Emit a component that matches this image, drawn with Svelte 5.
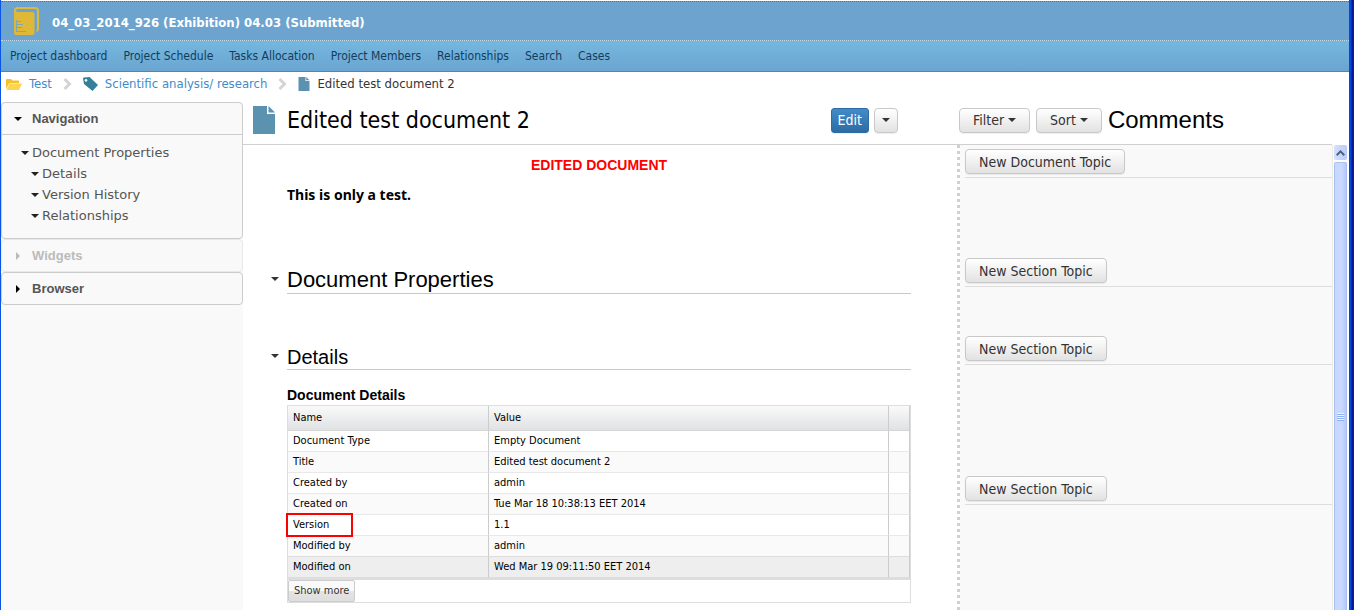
<script>
  const tabs = ['Project dashboard', 'Project Schedule', 'Tasks Allocation', 'Project Members', 'Relationships', 'Search', 'Cases'];
  const outline = ['Details', 'Version History', 'Relationships'];
  const rows = [
    ['Document Type', 'Empty Document'],
    ['Title', 'Edited test document 2'],
    ['Created by', 'admin'],
    ['Created on', 'Tue Mar 18 10:38:13 EET 2014'],
    ['Version', '1.1'],
    ['Modified by', 'admin'],
    ['Modified on', 'Wed Mar 19 09:11:50 EET 2014']
  ];
  const topics = [
    { label: 'New Document Topic', height: 33 },
    { label: 'New Section Topic', height: 109 },
    { label: 'New Section Topic', height: 78 },
    { label: 'New Section Topic', height: 140 }
  ];
</script>

{#snippet down()}
  <svg class="caret" width="8" height="4" viewBox="0 0 8 4" aria-hidden="true"><path d="M0 0h8L4 4z" fill="currentColor" /></svg>
{/snippet}

{#snippet right()}
  <svg class="caret" width="4" height="8" viewBox="0 0 4 8" aria-hidden="true"><path d="M0 0v8L4 4z" fill="currentColor" /></svg>
{/snippet}

{#snippet page(width, height)}
  <svg {width} {height} viewBox="0 0 22 28" aria-hidden="true">
    <path d="M0 0h14v8h8v20H0z" fill="#5a92af" />
    <path d="M15.500 0v6.500H22z" fill="#5a92af" />
  </svg>
{/snippet}

{#snippet chevron()}
  <svg class="chevron" width="9" height="12" viewBox="0 0 9 12" aria-hidden="true"><path d="M1.500 1l5 5-5 5" fill="none" stroke="#d4d4d4" stroke-width="3" /></svg>
{/snippet}

<div class="frame">
  <div class="app">
    <header>
      <div class="project">
        <svg width="26" height="28" viewBox="0 0 26 28" aria-hidden="true">
          <path d="M1 5V3.500Q1 1 4 1h17q3 0 3 3v18q0 1.500-1.500 2" fill="none" stroke="#e0b838" stroke-width="2" />
          <path d="M0 3Q1 5 4 5h14q2.500 0 2.500 2.500V26q0 2-2 2H2q-2 0-2-2z" fill="#e0b838" />
          <path d="M2.500 13v12M3 14.500h4M3 17.500h6M3 20.500h5M3 24.500h9" fill="none" stroke="#7fa8b4" stroke-width="1.200" />
        </svg>
        <strong>04_03_2014_926 (Exhibition) 04.03 (Submitted)</strong>
      </div>
      <nav class="tabs">
        {#each tabs as tab}<a href="#top">{tab}</a>{/each}
      </nav>
    </header>

    <nav class="crumbs" aria-label="Breadcrumb">
      <svg width="16" height="13" viewBox="0 0 16 13" aria-hidden="true">
        <path d="M0 11V2q0-1 1-1h4l1.500 1.500H12q1 0 1 1V5H3.500z" fill="#f3c02f" />
        <path d="M3.500 5.500H16L13 12H.500z" fill="#ffd451" />
      </svg>
      <a href="#test">Test</a>
      {@render chevron()}
      <svg width="15" height="14" viewBox="0 0 15 14" aria-hidden="true">
        <path fill-rule="evenodd" d="M0 1.500Q0 .500 1 .500L6.500 0 15 8l-5.500 6L1 7zM3 2a1.400 1.400 0 1 0 .010 0z" fill="#347f99" />
      </svg>
      <a href="#research">Scientific analysis/ research</a>
      {@render chevron()}
      {@render page(12, 14)}
      <span>Edited test document 2</span>
    </nav>

    <div class="body">
      <aside class="side">
        <section class="panel">
          <button class="fold">{@render down()}Navigation</button>
          <div class="tree">
            <a href="#properties">{@render down()}Document Properties</a>
            {#each outline as item}<a class="sub" href="#details">{@render down()}{item}</a>{/each}
          </div>
        </section>
        <section class="panel muted"><button class="fold">{@render right()}Widgets</button></section>
        <section class="panel"><button class="fold">{@render right()}Browser</button></section>
      </aside>

      <main>
        <div class="bar titlebar">
          {@render page(22, 28)}
          <h1>Edited test document 2</h1>
          <button class="btn primary">Edit</button>
          <button class="btn more" aria-label="More actions">{@render down()}</button>
        </div>
        <article>
          <p class="notice">EDITED DOCUMENT</p>
          <p class="intro">This is only a test.</p>
          <h2 id="properties">{@render down()}Document Properties</h2>
          <h2 id="details" class="small">{@render down()}Details</h2>
          <h3>Document Details</h3>
          <table>
            <colgroup><col class="name" /><col /><col class="tail" /></colgroup>
            <thead><tr><th>Name</th><th>Value</th><th></th></tr></thead>
            <tbody>
              {#each rows as [name, value]}
                <tr><td>{#if name === 'Version'}<span class="mark"></span>{/if}{name}</td><td>{value}</td><td></td></tr>
              {/each}
            </tbody>
          </table>
          <div class="foot"><button>Show more</button></div>
        </article>
      </main>

      <section class="comments">
        <div class="bar tools">
          <button class="btn">Filter{@render down()}</button>
          <button class="btn">Sort{@render down()}</button>
          <h1>Comments</h1>
        </div>
        <div class="thread">
          <div class="topics">
            {#each topics as topic}
              <div class="topic" style:height="{topic.height}px"><button class="btn">{topic.label}</button></div>
            {/each}
          </div>
          <div class="scroll" aria-hidden="true">
            <div class="up">
              <svg width="9" height="6" viewBox="0 0 9 6"><path d="M.700 5.200l3.800-3.800 3.800 3.800" fill="none" stroke="#4d6185" stroke-width="2" /></svg>
            </div>
            <div class="thumb"><i></i></div>
          </div>
        </div>
      </section>
    </div>
  </div>
</div>

<style>
  :global(body) { margin: 0; overflow: hidden; }
  * { box-sizing: border-box; }
  .frame {
    height: 100vh;
    padding: 1px 5px 0 1px;
    overflow: hidden;
    background: linear-gradient(90deg, #0a55e4, #0a55e4) left / 1px 100% no-repeat,
      linear-gradient(90deg, #0831d9 0, #0855dd 1px, #0040d8 2px, #001aa0 3px, #00138c 4px, #39335c 5px) right / 5px 100% no-repeat,
      #fff;
    font: 13px/18px "DejaVu Sans Condensed", "DejaVu Sans", sans-serif;
    color: #000;
  }
  .app { height: 100%; display: flex; flex-direction: column; background: #fff; }
  a { text-decoration: none; color: inherit; }
  button { font: inherit; cursor: pointer; }
  svg { flex: none; display: block; }
  h1, h2, h3, p { margin: 0; font-weight: 400; }

  .project {
    height: 40px;
    padding: 0 13px;
    display: flex;
    align-items: center;
    gap: 12px;
    border-top: 1px dotted #48749a;
    border-bottom: 1px dotted #c4dcec;
    background: #6ca4cf;
    color: #fff;
  }
  .project strong { padding-top: 3px; }
  .tabs {
    height: 31px;
    padding: 0 9px;
    display: flex;
    align-items: center;
    gap: 16px;
    border-bottom: 1px solid #4b89b4;
    background: linear-gradient(#76b7dd, #6aa5d1);
    color: #123d5e;
    font-size: 12px;
  }
  .crumbs {
    height: 30px;
    padding: 0 5px 6px;
    display: flex;
    align-items: center;
    gap: 7px;
    color: #333;
  }
  .crumbs a { color: #428bca; }
  .crumbs .chevron { margin: 0 4px; }

  .body { flex: 1; min-height: 0; display: grid; grid-template-columns: 242px minmax(0, 1fr) 392px; }
  .side { background: #f9f9f9; color: #555; }
  .panel { border: 1px solid #ccc; border-radius: 4px; }
  .fold {
    width: 100%;
    height: 31px;
    padding: 0 12px;
    display: flex;
    align-items: center;
    border: 0;
    background: none;
    color: #555;
    font: bold 13px/18px "Liberation Sans", Arial, sans-serif;
  }
  .fold .caret { width: 8px; margin-right: 10px; color: #000; }
  .muted { border-color: #e8e8e8; }
  .muted .fold, .muted .fold .caret { color: #bbb; }
  .tree {
    padding: 7px 19px 12px;
    border-top: 1px solid #ccc;
    display: flex;
    flex-direction: column;
    font: 13px/21px "DejaVu Sans", Verdana, sans-serif;
  }
  .tree a { display: flex; align-items: center; gap: 3px; }
  .tree .caret { color: #222; }
  .tree .sub { padding-left: 10px; }

  .bar { height: 43px; display: flex; align-items: center; border-bottom: 1px solid #d0d0d0; }
  .titlebar { padding: 0 59px 6px 10px; gap: 5px; }
  .titlebar h1 { flex: 1; padding-left: 7px; font-size: 23px; line-height: 28px; }
  .btn {
    height: 25px;
    padding: 0 13px;
    display: inline-flex;
    align-items: center;
    gap: 4px;
    border: 1px solid #c8c8c8;
    border-radius: 4px;
    background: linear-gradient(#fff, #e2e2e2);
    box-shadow: 0 1px 1px #0001;
    color: #333;
    font: 14px/18px "DejaVu Sans Condensed", "DejaVu Sans", sans-serif;
    white-space: nowrap;
  }
  .primary { padding: 0 6px; border-color: #2d6ca2; border-radius: 3px; background: linear-gradient(#428bca, #2d6ca2); color: #fff; }
  .more { padding: 0 7px; }
  article { padding: 10px 46px 0 44px; font: 14px/20px "Liberation Sans", Arial, sans-serif; }
  .notice { color: #f00; font-weight: 700; text-align: center; }
  .intro { margin: 10px 0 62px; font: bold 14px/20px "Noto Sans", sans-serif; }
  h2 { display: flex; align-items: center; height: 27px; margin-bottom: 50px; border-bottom: 1px solid #c8c8c8; font-size: 22px; line-height: 26px; }
  h2 .caret { width: 8px; margin: 0 8px 2px -16px; color: #333; }
  h2.small { height: 26px; margin-bottom: 15px; font-size: 20px; }
  h3 { font-size: 14px; font-weight: 700; }

  table { width: 100%; table-layout: fixed; border-collapse: separate; border-spacing: 0; border: 1px solid #ddd; border-bottom: 2px solid #ddd; font: 11px/14px "DejaVu Sans Condensed", "DejaVu Sans", sans-serif; }
  .name { width: 201px; }
  .tail { width: 21px; }
  th, td { padding: 0 5px; text-align: left; font-weight: 400; border-right: 1px solid #ccc; }
  th { height: 25px; border-bottom: 1px solid #d6d6d6; }
  td { position: relative; height: 21px; border-bottom: 1px solid #e8e8e8; }
  tbody tr:nth-child(even) td { background: #fafafa; }
  tbody tr:nth-child(6) td { border-bottom-color: #ddd; }
  tbody tr:last-child td { border-bottom-color: #ddd; background: #eee; }
  thead th { background: linear-gradient(#fafafa, #dfe1e3); }
  .mark { position: absolute; left: -2px; top: -2px; width: 67px; height: 24px; border: 2px solid #f00; z-index: 1; }
  .foot { height: 23px; border: 1px solid #ddd; border-top: 0; }
  .foot button {
    height: 22px;
    padding: 0 5px;
    display: block;
    border: 1px solid #ccc;
    border-radius: 2px;
    background: linear-gradient(#fafafa 0 50%, #e4e4e4 50%, #dedede);
    color: #333;
    font: 11px/14px "DejaVu Sans Condensed", "DejaVu Sans", sans-serif;
  }

  .comments { display: flex; flex-direction: column; min-height: 0; }
  .tools { margin-right: 17px; padding: 0 2px 6px; gap: 6px; }
  .tools h1 { font: 24px/28px "Liberation Sans", Arial, sans-serif; }
  .thread { flex: 1; min-height: 0; display: flex; }
  .topics {
    flex: 1;
    overflow: hidden;
    padding-left: 8px;
    background: repeating-linear-gradient(#d0d0d0 0 3px, #fff 3px 6px) left top / 3px 100% no-repeat, #f9f9f9;
    border-right: 1px solid #eeebe2;
  }
  .topic { display: flex; align-items: flex-end; padding-bottom: 3px; border-bottom: 1px solid #ddd; }
  .scroll { width: 16px; padding: 0 2px 0 1px; display: flex; flex-direction: column; background: #fdfdfa; }
  .up { height: 15px; display: grid; place-items: center; border-radius: 2px; background: linear-gradient(90deg, #d5e0ff, #b9ccf9); }
  .thumb {
    flex: 1;
    margin-top: 2px;
    display: grid;
    place-items: center;
    border: 1px solid #a9c0f5;
    border-bottom: 0;
    border-radius: 2px 2px 0 0;
    background: linear-gradient(90deg, #c9d8fe 0 60%, #b5c9fa);
  }
  .thumb i { width: 7px; height: 8px; margin-top: 60px; background: repeating-linear-gradient(#eef4fe 0 1px, #8cb0f8 1px 2px); }
</style>
